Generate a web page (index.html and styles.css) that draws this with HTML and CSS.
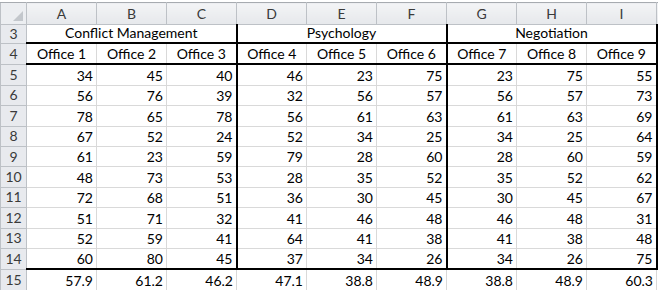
FILE: index.html
```html
<!DOCTYPE html>
<html>
<head>
<meta charset="utf-8">
<link rel="stylesheet" href="styles.css">
</head>
<body>
<div class="strip"></div>
<table class="sheet">
  <colgroup>
    <col class="rh-col">
    <col class="c"><col class="c"><col class="c"><col class="c"><col class="c"><col class="c"><col class="c"><col class="c"><col class="c">
    <col class="tail">
  </colgroup>
  <thead>
    <tr class="colhead">
      <th class="corner"><span class="tri"></span></th>
      <th>A</th><th>B</th><th>C</th><th>D</th><th>E</th><th>F</th><th>G</th><th>H</th><th>I</th><th class="tailh"></th>
    </tr>
  </thead>
  <tbody>
    <tr class="r3">
      <th class="rh">3</th>
      <td colspan="3" class="grp">Conflict Management</td>
      <td colspan="3" class="grp sep">Psychology</td>
      <td colspan="3" class="grp sep end">Negotiation</td>
      <td class="tailc"></td>
    </tr>
    <tr class="r4">
      <th class="rh">4</th>
      <td class="lbl">Office 1</td><td class="lbl">Office 2</td><td class="lbl">Office 3</td>
      <td class="lbl sep">Office 4</td><td class="lbl">Office 5</td><td class="lbl">Office 6</td>
      <td class="lbl sep">Office 7</td><td class="lbl">Office 8</td><td class="lbl end">Office 9</td>
      <td class="tailc"></td>
    </tr>
    <tr><th class="rh">5</th><td>34</td><td>45</td><td>40</td><td class="sep">46</td><td>23</td><td>75</td><td class="sep">23</td><td>75</td><td class="end">55</td><td class="tailc"></td></tr>
    <tr><th class="rh">6</th><td>56</td><td>76</td><td>39</td><td class="sep">32</td><td>56</td><td>57</td><td class="sep">56</td><td>57</td><td class="end">73</td><td class="tailc"></td></tr>
    <tr><th class="rh">7</th><td>78</td><td>65</td><td>78</td><td class="sep">56</td><td>61</td><td>63</td><td class="sep">61</td><td>63</td><td class="end">69</td><td class="tailc"></td></tr>
    <tr><th class="rh">8</th><td>67</td><td>52</td><td>24</td><td class="sep">52</td><td>34</td><td>25</td><td class="sep">34</td><td>25</td><td class="end">64</td><td class="tailc"></td></tr>
    <tr><th class="rh">9</th><td>61</td><td>23</td><td>59</td><td class="sep">79</td><td>28</td><td>60</td><td class="sep">28</td><td>60</td><td class="end">59</td><td class="tailc"></td></tr>
    <tr><th class="rh">10</th><td>48</td><td>73</td><td>53</td><td class="sep">28</td><td>35</td><td>52</td><td class="sep">35</td><td>52</td><td class="end">62</td><td class="tailc"></td></tr>
    <tr><th class="rh">11</th><td>72</td><td>68</td><td>51</td><td class="sep">36</td><td>30</td><td>45</td><td class="sep">30</td><td>45</td><td class="end">67</td><td class="tailc"></td></tr>
    <tr><th class="rh">12</th><td>51</td><td>71</td><td>32</td><td class="sep">41</td><td>46</td><td>48</td><td class="sep">46</td><td>48</td><td class="end">31</td><td class="tailc"></td></tr>
    <tr><th class="rh">13</th><td>52</td><td>59</td><td>41</td><td class="sep">64</td><td>41</td><td>38</td><td class="sep">41</td><td>38</td><td class="end">48</td><td class="tailc"></td></tr>
    <tr class="r14"><th class="rh">14</th><td>60</td><td>80</td><td>45</td><td class="sep">37</td><td>34</td><td>26</td><td class="sep">34</td><td>26</td><td class="end">75</td><td class="tailc"></td></tr>
    <tr class="r15"><th class="rh">15</th><td>57.9</td><td>61.2</td><td>46.2</td><td>47.1</td><td>38.8</td><td>48.9</td><td>38.8</td><td>48.9</td><td>60.3</td><td class="tailc"></td></tr>
    <tr class="r16"><th class="rh"></th><td></td><td></td><td></td><td></td><td></td><td></td><td></td><td></td><td></td><td class="tailc"></td></tr>
  </tbody>
</table>
</body>
</html>
```

FILE: styles.css
```css
html, body {
  margin: 0;
  padding: 0;
  background: #ffffff;
  overflow: hidden;
}

.strip {
  height: 2px;
  background: #ffffff;
}

.sheet {
  border-collapse: collapse;
  table-layout: fixed;
  font-family: Lato, "Liberation Sans", sans-serif;
  font-size: 14px;
  color: #000000;
  width: 686px;
}

.rh-col { width: 26px; }
.c { width: 70px; }
.tail { width: 30px; }

.sheet th,
.sheet td {
  padding: 0 3px;
  line-height: 16px;
  white-space: nowrap;
  overflow: hidden;
  border: 1px solid #d9d9d9;
}

.sheet td {
  height: 18.4px;
  text-align: right;
  vertical-align: bottom;
  padding-bottom: 1px;
}

.sheet .r3 td {
  height: 16px;
}

.colhead th {
  height: 21px;
  background: linear-gradient(#f3f4f6, #e6e8eb);
  border: 1px solid #bdc1c6;
  border-top-color: #a7abb0;
  color: #3a3a3a;
  font-weight: normal;
  text-align: center;
  vertical-align: middle;
  padding: 0;
}

.colhead .corner {
  position: relative;
  background: #eceef1;
}

.tri {
  position: absolute;
  right: 3px;
  bottom: 3px;
  width: 0;
  height: 0;
  border-left: 10px solid transparent;
  border-bottom: 10px solid #c3c7cc;
}

.sheet th.rh {
  background: #e8eaee;
  border: 1px solid #bdc1c6;
  color: #3a3a3a;
  font-weight: normal;
  text-align: center;
  vertical-align: middle;
  padding: 0;
}

.r3 td.grp {
  text-align: center;
  border-bottom: 2px solid #000000;
}

.sheet td.sep {
  border-left: 2px solid #000000;
}

.sheet td.end {
  border-right: 2px solid #000000;
}

.r4 td {
  text-align: center;
  border-bottom: 2px solid #000000;
}

.r14 td {
  border-bottom: 2px solid #000000;
}

.sheet td.tailc {
  border-right: none;
}
```
